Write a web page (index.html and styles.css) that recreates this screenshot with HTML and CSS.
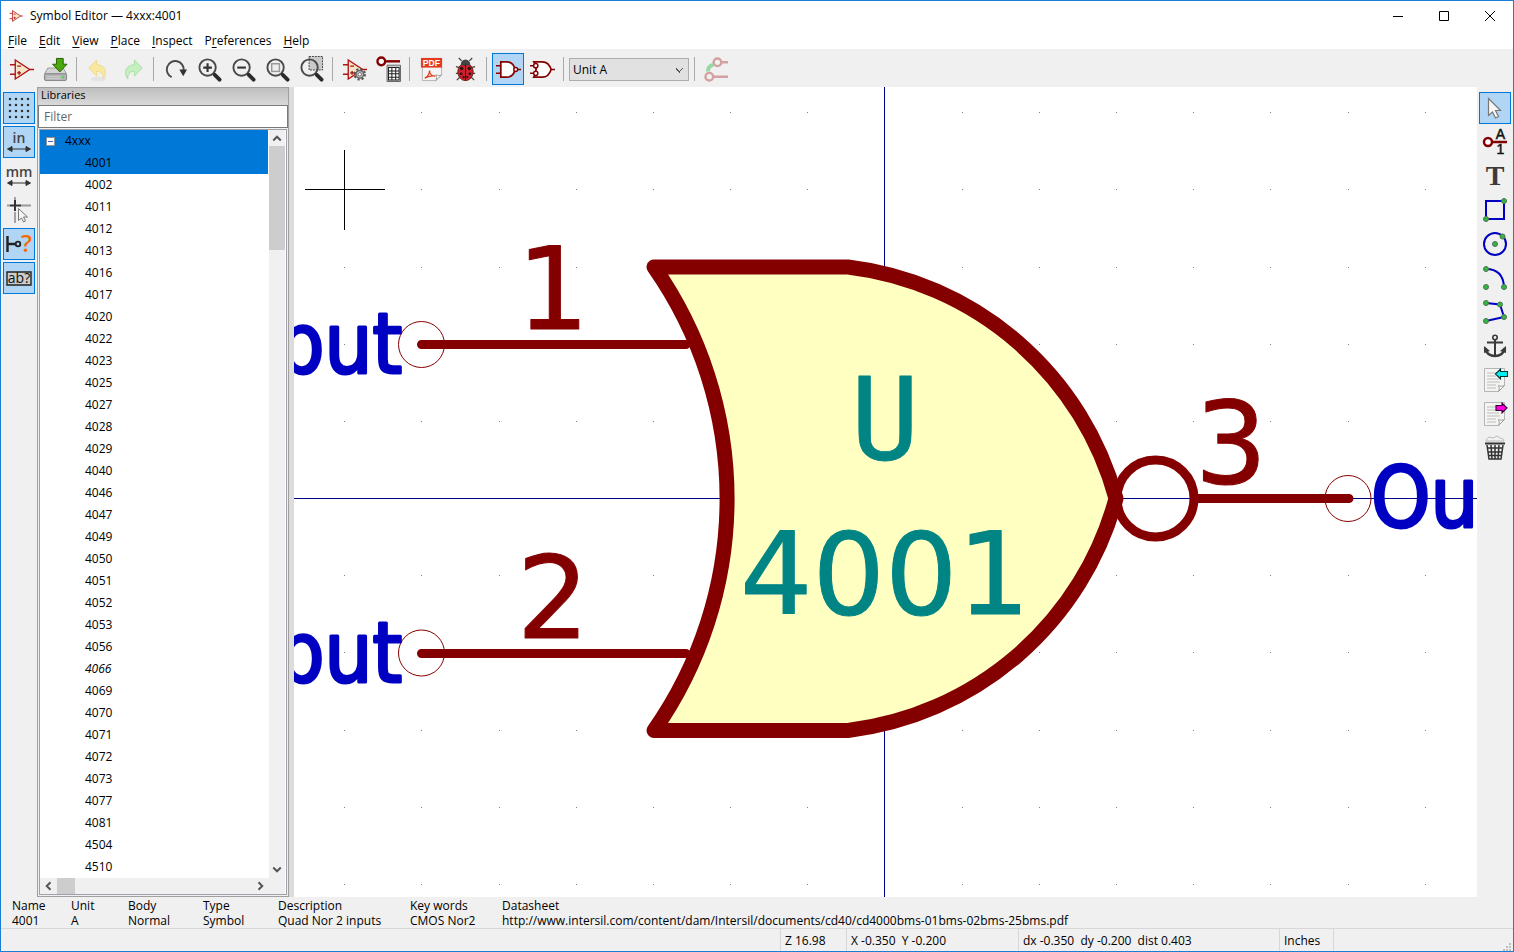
FILE: index.html
```html
<!DOCTYPE html>
<html lang="en">
<head>
<meta charset="utf-8">
<title>Symbol Editor — 4xxx:4001</title>
<link rel="stylesheet" href="styles.css">
</head>
<body>
<svg class="defs" aria-hidden="true">
  <defs>
    <symbol id="opamp" viewBox="0 0 26 26">
      <path d="M6.500 3v20L21.500 13z" fill="#f5e4c6" stroke="#b01414" stroke-width="1.400"/>
      <path d="M1 8h5.500M1 18h5.500M21 13h5M8.500 9.500h4M8.500 16.500h4M10.500 14.500v4" fill="none" stroke="#b01414" stroke-width="1.500"/>
    </symbol>
    <symbol id="lens" viewBox="0 0 26 26">
      <circle cx="11" cy="11" r="8.500" fill="none" stroke="#4a4a4a" stroke-width="2"/>
      <path d="M17 17l2 2" stroke="#4a4a4a" stroke-width="2"/>
      <path d="M18.500 18.500l5 5" stroke="#2b2b2b" stroke-width="4" stroke-linecap="round"/>
    </symbol>
    <symbol id="page" viewBox="0 0 26 26">
      <path d="M3.500 1.500h20v17l-6 6h-14z" fill="#f4f4f2" stroke="#b5b5b5"/>
      <path d="M17.500 24.500c1-2 1-3.500 0-6 2 1 4 1 6 0z" fill="#fff" stroke="#9a9a9a"/>
    </symbol>
    <symbol id="sheet" viewBox="0 0 26 26">
      <use href="#page"/>
      <path d="M6 6h10M6 9h9M6 12h12M6 15h13M6 18h9M6 21h9" stroke="#bdbdbd"/>
    </symbol>
    <symbol id="span" viewBox="0 0 26 26">
      <path d="M5 20h16M6 17.500L1.500 20 6 22.500zM20 17.500l4.500 2.500-4.500 2.500z" fill="#333" stroke="#333"/>
    </symbol>
  </defs>
</svg>
<div class="window">
  <header class="titlebar">
    <svg class="app-icon"><use href="#opamp"/></svg>
    <h1 class="title">Symbol Editor — 4xxx:4001</h1>
    <button class="caption" aria-label="Minimize"><svg viewBox="0 0 12 12"><path d="M1 6.500h10"/></svg></button>
    <button class="caption" aria-label="Maximize"><svg viewBox="0 0 12 12"><path d="M1.500 1.500h9v9h-9z"/></svg></button>
    <button class="caption" aria-label="Close"><svg viewBox="0 0 12 12"><path d="M1 1l10 10M11 1L1 11"/></svg></button>
  </header>

  <nav class="menubar" aria-label="Main menu">
    <button class="menu"><u>F</u>ile</button>
    <button class="menu"><u>E</u>dit</button>
    <button class="menu"><u>V</u>iew</button>
    <button class="menu"><u>P</u>lace</button>
    <button class="menu"><u>I</u>nspect</button>
    <button class="menu">P<u>r</u>eferences</button>
    <button class="menu"><u>H</u>elp</button>
  </nav>

  <div class="toolbar" role="toolbar" aria-label="Main toolbar">
    <button class="tool" aria-label="New symbol"><svg><use href="#opamp"/></svg></button>
    <button class="tool" aria-label="Save"><svg viewBox="0 0 26 26">
      <path d="M5 11.500h16l3.500 6H1.500z" fill="#d4d4d4" stroke="#9a9a9a"/>
      <rect x="1.500" y="17.500" width="23" height="7" rx="1.500" fill="#b2b4b6" stroke="#838383"/>
      <path d="M4 20.500h14M4 22.500h14" stroke="#d0d0d0"/><path d="M20 21h2" stroke="#2ee62e" stroke-width="2"/>
      <path d="M14 1.500h7v6h4l-7.500 8L10 7.500h4z" fill="#4aa80c" stroke="#255d03"/></svg></button>
    <span class="divider"></span>
    <button class="tool" aria-label="Undo" disabled><svg viewBox="0 0 26 26">
      <ellipse cx="13" cy="23" rx="8" ry="2.500" fill="#e4e4e4"/>
      <path d="M11 3v5c8 0 12 7 7 15 0-6-2-8-7-8v5l-8-8.500z" fill="#f9e8a0" stroke="#eedb86"/></svg></button>
    <button class="tool" aria-label="Redo" disabled><svg viewBox="0 0 26 26">
      <path d="M15 3v5C7 8 3 15 8 23c0-6 2-8 7-8v5l8-8.500z" fill="#c6efc0" stroke="#a9dfa6"/></svg></button>
    <span class="divider"></span>
    <button class="tool" aria-label="Refresh"><svg viewBox="0 0 26 26">
      <path d="M9 21A8.800 8.800 0 1 1 21.500 14" fill="none" stroke="#4a4a4a" stroke-width="2"/><path d="M17 13h8l-4 7z" fill="#333"/></svg></button>
    <button class="tool" aria-label="Zoom in"><svg viewBox="0 0 26 26"><use href="#lens"/><path d="M6.500 11h9M11 6.500v9" stroke="#333" stroke-width="2.200"/></svg></button>
    <button class="tool" aria-label="Zoom out"><svg viewBox="0 0 26 26"><use href="#lens"/><path d="M6.500 11h9" stroke="#333" stroke-width="2.200"/></svg></button>
    <button class="tool" aria-label="Zoom to fit"><svg viewBox="0 0 26 26"><use href="#lens"/><rect x="7" y="7" width="8" height="8" fill="#eee" stroke="#999" stroke-width="1.500"/></svg></button>
    <button class="tool" aria-label="Zoom to selection"><svg viewBox="0 0 26 26"><path d="M10.500-.500h14v14h-14z" fill="#c9c9c9" stroke="#444" stroke-dasharray="2 1"/><use href="#lens"/></svg></button>
    <span class="divider"></span>
    <button class="tool" aria-label="Symbol properties"><svg viewBox="0 0 26 26"><use href="#opamp"/>
      <circle cx="18.500" cy="18" r="5" fill="none" stroke="#555" stroke-width="3" stroke-dasharray="2 1.900"/>
      <circle cx="18.500" cy="18" r="4" fill="#c8c8c8" stroke="#666" stroke-width="1.500"/><circle cx="18.500" cy="18" r="1.800" fill="#fff" stroke="#666"/></svg></button>
    <button class="tool" aria-label="Pin table"><svg viewBox="0 0 26 26">
      <path d="M9 4.500h16" stroke="#840000" stroke-width="2.500"/><circle cx="5.500" cy="4.500" r="4" fill="#fff" stroke="#840000" stroke-width="2.500"/>
      <path d="M11.500 8.500h14v17h-14z" fill="#ccc" stroke="#666"/><path d="M13 11h11v13H13z" fill="#fff"/><path d="M13 11h11v13H13zM13 14.500h11M13 17.500h11M13 21h11M16.500 11v13M20.500 11v13" fill="none" stroke="#222" stroke-width="1.100"/></svg></button>
    <span class="divider"></span>
    <button class="tool" aria-label="Show datasheet"><svg viewBox="0 0 26 26"><use href="#page"/>
      <path d="M2 1h22v10H2z" fill="#e33a1f"/>
      <text x="4" y="9" class="pdf">PDF</text>
      <path d="M6 22c3-1 5-5 5-8 0 4 3 6 6 6-4-1-7 0-11 2z" fill="none" stroke="#e33a1f" stroke-width="1.300"/></svg></button>
    <button class="tool" aria-label="Check symbol"><svg viewBox="0 0 26 26">
      <path d="M9 4L6 1M17 4l3-3M3 10l4 1M23 10l-4 1M3 17h4M23 17h-4M4 24l4-4M22 24l-4-4" stroke="#444" stroke-width="1.300"/>
      <ellipse cx="13" cy="15.500" rx="8" ry="9" fill="#cf2030" stroke="#621"/><path d="M8 8a5 5.500 0 0 1 10 0q-5 2-10 0z" fill="#444"/>
      <path d="M13 8v16.500" stroke="#400"/><g fill="#301010"><circle cx="9" cy="12" r="1.800"/><circle cx="17" cy="12" r="1.800"/><circle cx="8.500" cy="17.500" r="1.500"/><circle cx="17.500" cy="17.500" r="1.500"/><circle cx="11" cy="21" r="1.200"/><circle cx="15" cy="21" r="1.200"/></g></svg></button>
    <span class="divider"></span>
    <button class="tool pressed" aria-label="Normal body style" aria-pressed="true"><svg viewBox="0 0 26 26">
      <path d="M0 9h5M0 17h5M22 13h4" stroke="#840000" stroke-width="1.600"/><path d="M5 5h6.500a8 8 0 0 1 0 16H5z" fill="#fff" stroke="#840000" stroke-width="1.800"/><circle cx="20.500" cy="13" r="2" fill="#fff" stroke="#840000" stroke-width="1.500"/></svg></button>
    <button class="tool" aria-label="Alternate body style"><svg viewBox="0 0 26 26">
      <path d="M4 5h9c5 0 7.500 3.500 9 8-1.500 4.500-4 8-9 8H4c3-5 3-11 0-16z" fill="#fff" stroke="#840000" stroke-width="1.800"/><path d="M0 9h4M0 17h4M22 13h4" stroke="#840000" stroke-width="1.600"/><circle cx="6" cy="9" r="2.200" fill="#fff" stroke="#840000" stroke-width="1.500"/><circle cx="6" cy="17" r="2.200" fill="#fff" stroke="#840000" stroke-width="1.500"/></svg></button>
    <span class="divider"></span>
    <select class="unit" aria-label="Unit"><option>Unit A</option></select>
    <span class="divider"></span>
    <button class="tool" aria-label="Synchronized pins" disabled><svg viewBox="0 0 26 26" fill="none">
      <path d="M17 5.500h8M9 20.500h16" stroke="#d5a0a0" stroke-width="2.500"/><circle cx="14" cy="5.500" r="4" stroke="#d5a0a0" stroke-width="2.500"/><circle cx="5.500" cy="20.500" r="4" stroke="#d5a0a0" stroke-width="2.500"/><path d="M4 15c0-4 2-6 6-7" stroke="#98d8a4" stroke-width="4"/></svg></button>
  </div>

  <main class="workspace">
    <div class="rail" role="toolbar" aria-label="Display options">
      <button class="tool pressed" aria-label="Show grid" aria-pressed="true"><svg viewBox="0 0 26 26"><path d="M4 4h20M4 10h20M4 16h20M4 22h20" stroke="#333" stroke-width="2.600" stroke-linecap="round" stroke-dasharray="0 6"/></svg></button>
      <button class="tool pressed" aria-label="Inches" aria-pressed="true"><svg viewBox="0 0 26 26"><text x="13" y="14" class="units">in</text><use href="#span"/></svg></button>
      <button class="tool" aria-label="Millimeters"><svg viewBox="0 0 26 26"><text x="13" y="14" class="units">mm</text><use href="#span"/></svg></button>
      <button class="tool" aria-label="Full-window crosshair"><svg viewBox="0 0 26 26"><path d="M9 0v3M9 15v11M1 8.500h3M15 8.500h10" stroke="#999" stroke-width="1.800"/><path d="M9 3v11M4 8.500h11" stroke="#333" stroke-width="2"/><path d="M12.500 11.500v12l3-2.500 2 4 2-1-2-4h4z" fill="#f4f4f4" stroke="#777"/></svg></button>
      <button class="tool pressed" aria-label="Show pin electrical type" aria-pressed="true"><svg viewBox="0 0 26 26"><path d="M1.500 5v16M2 13h8" stroke="#222" stroke-width="2.400"/><circle cx="12" cy="13" r="2.300" fill="none" stroke="#222" stroke-width="1.800"/><text x="15" y="21" class="question">?</text></svg></button>
      <button class="tool pressed" aria-label="Show hidden fields" aria-pressed="true"><svg viewBox="0 0 26 26"><path d="M1 7h24v13H1z" fill="#ccc" stroke="#222" stroke-width="1.400"/><text x="13" y="18" class="abq">ab?</text></svg></button>
    </div>

    <aside class="libraries">
      <h2 class="panel-title"><label for="filter">Libraries</label></h2>
      <input class="filter" id="filter" type="text" placeholder="Filter">
      <div class="tree">
        <ul class="rows">
          <li class="row root selected"><button class="toggle" aria-label="Collapse 4xxx"></button>4xxx</li>
          <li class="row selected">4001</li>
          <li class="row">4002</li><li class="row">4011</li><li class="row">4012</li><li class="row">4013</li>
          <li class="row">4016</li><li class="row">4017</li><li class="row">4020</li><li class="row">4022</li>
          <li class="row">4023</li><li class="row">4025</li><li class="row">4027</li><li class="row">4028</li>
          <li class="row">4029</li><li class="row">4040</li><li class="row">4046</li><li class="row">4047</li>
          <li class="row">4049</li><li class="row">4050</li><li class="row">4051</li><li class="row">4052</li>
          <li class="row">4053</li><li class="row">4056</li><li class="row alias">4066</li><li class="row">4069</li>
          <li class="row">4070</li><li class="row">4071</li><li class="row">4072</li><li class="row">4073</li>
          <li class="row">4077</li><li class="row">4081</li><li class="row">4504</li><li class="row">4510</li>
        </ul>
        <div class="vscroll">
          <button class="arrow" aria-label="Scroll up"><svg viewBox="0 0 8 8"><path d="M1 6l3-3 3 3"/></svg></button>
          <span class="vthumb"></span>
          <button class="arrow end" aria-label="Scroll down"><svg viewBox="0 0 8 8"><path d="M1 2l3 3 3-3"/></svg></button>
        </div>
        <div class="hscroll">
          <button class="arrow" aria-label="Scroll left"><svg viewBox="0 0 8 8"><path d="M6 1L3 4l3 3"/></svg></button>
          <span class="hthumb"></span>
          <button class="arrow end" aria-label="Scroll right"><svg viewBox="0 0 8 8"><path d="M2 1l3 3-3 3"/></svg></button>
        </div>
      </div>
    </aside>
    <div class="splitter"></div>

    <div class="canvas">
      <svg class="drawing" viewBox="294 87 1183 810" preserveAspectRatio="xMidYMid slice" role="img" aria-label="Symbol 4001">
        <defs>
          <path id="dots" d="M344 0h1v1h-1zM421 0h1v1h-1zM499 0h1v1h-1zM576 0h1v1h-1zM653 0h1v1h-1zM730 0h1v1h-1zM807 0h1v1h-1zM962 0h1v1h-1zM1039 0h1v1h-1zM1116 0h1v1h-1zM1193 0h1v1h-1zM1270 0h1v1h-1zM1348 0h1v1h-1zM1425 0h1v1h-1z"/>
        </defs>
        <g fill="#848484">
          <use href="#dots" y="112"/><use href="#dots" y="189"/><use href="#dots" y="267"/><use href="#dots" y="344"/><use href="#dots" y="421"/>
          <use href="#dots" y="575"/><use href="#dots" y="652"/><use href="#dots" y="730"/><use href="#dots" y="807"/><use href="#dots" y="884"/>
        </g>
        <path class="axis" d="M884.500 87v810M294 498.500h1183"/>
        <path class="body" d="M654 267H848A317 317 0 0 1 1116 498.500A317 317 0 0 1 848 730.500H654A404 404 0 0 0 654 267z"/>
        <g class="pins">
          <path d="M421.500 344.500H686M421.500 653.500H686M1198 498.500H1349"/>
          <circle cx="1155.500" cy="498.500" r="38.500"/>
        </g>
        <g class="ends"><circle cx="421.500" cy="344.500" r="23"/><circle cx="421.500" cy="653" r="23"/><circle cx="1348" cy="498.500" r="23"/></g>
        <g class="pin-number">
          <text x="553" y="329">1</text><text x="553" y="638">2</text><text x="1231" y="483">3</text>
        </g>
        <g class="field"><text class="reference" x="885" y="459">U</text><text x="885" y="614">4001</text></g>
        <g class="pin-name">
          <text x="402" y="373" text-anchor="end">Input</text><text x="402" y="682" text-anchor="end">Input</text><text x="1371" y="527">Output</text>
        </g>
        <path d="M305 189.500h80M344.500 150v80" stroke="#000"/>
      </svg>
    </div>

    <div class="rail" role="toolbar" aria-label="Drawing tools">
      <button class="tool pressed" aria-label="Select" aria-pressed="true"><svg viewBox="0 0 26 26"><path d="M6.500 3.500v17l4-3.500 3 6 3-1.500-3-6h5z" fill="#f8f8f8" stroke="#777" stroke-width="1.200"/></svg></button>
      <button class="tool" aria-label="Add pin"><svg viewBox="0 0 26 26"><path d="M9 13h16" stroke="#840000" stroke-width="2.500"/><circle cx="6" cy="13" r="4" fill="#fff" stroke="#840000" stroke-width="2.500"/><text x="18.500" y="10" class="pin-glyph">A</text><text x="18.500" y="25" class="pin-glyph">1</text></svg></button>
      <button class="tool" aria-label="Add text"><svg viewBox="0 0 26 26"><text x="13" y="22" class="serif-t">T</text></svg></button>
      <button class="tool" aria-label="Add rectangle"><svg class="shape" viewBox="0 0 26 26"><path d="M4 4h18v18H4z"/><circle cx="22" cy="4" r="2.500"/><circle cx="4" cy="22" r="2.500"/></svg></button>
      <button class="tool" aria-label="Add circle"><svg class="shape" viewBox="0 0 26 26"><path d="M13 2a11 11 0 1 1 0 22a11 11 0 1 1 0-22"/><circle cx="13" cy="13" r="2.500"/><circle cx="20.500" cy="5.500" r="2.500"/></svg></button>
      <button class="tool" aria-label="Add arc"><svg class="shape" viewBox="0 0 26 26"><path d="M4 4q17 0 18 18"/><circle cx="4" cy="4" r="2.500"/><circle cx="4" cy="22" r="2.500"/><circle cx="22" cy="22" r="2.500"/></svg></button>
      <button class="tool" aria-label="Add lines"><svg class="shape" viewBox="0 0 26 26"><path d="M4 4l14 1.500 4 12.500L4 22"/><circle cx="4" cy="4" r="2.500"/><circle cx="18" cy="5.500" r="2.500"/><circle cx="22" cy="18" r="2.500"/><circle cx="4" cy="22" r="2.500"/></svg></button>
      <button class="tool" aria-label="Set anchor"><svg viewBox="0 0 26 26" fill="none" stroke="#3a3a3a"><circle cx="13" cy="4.500" r="2.200" stroke-width="1.600"/><path d="M13 7v16M5 9.500h16" stroke-width="2"/><path d="M3 15c1 5 5 8 10 8s9-3 10-8" stroke-width="2.600"/><path d="M2 20v-7l6 5zM24 20v-7l-6 5z" fill="#3a3a3a" stroke="none"/></svg></button>
      <button class="tool" aria-label="Import symbol"><svg viewBox="0 0 26 26"><use href="#sheet" x="-1"/><path d="M13.500 7l5-5v2.500h7v5h-7V12z" fill="#00f0f0" stroke="#033" stroke-width="1.100"/></svg></button>
      <button class="tool" aria-label="Export symbol"><svg viewBox="0 0 26 26"><use href="#sheet" x="-1"/><path d="M25 7l-5-5v2.500h-6v5h6V12z" fill="#f0d" stroke="#303" stroke-width="1.100"/></svg></button>
      <button class="tool" aria-label="Delete"><svg viewBox="0 0 26 26"><path d="M4 5l3-3 4 1 4-2 3 2 3 1 1 2H4z" fill="#f2f2f2" stroke="#bbb"/><path d="M3 8.500h20" stroke="#333" stroke-width="2"/><path d="M5 10l2 14h12l2-14M9 10l1 14M13 10v14M17 10l-1 14M5 13h16M6 17h14M6 20.500h14" fill="none" stroke="#333" stroke-width="1.500"/></svg></button>
    </div>
  </main>

  <dl class="info">
    <div><dt>Name</dt><dd>4001</dd></div>
    <div><dt>Unit</dt><dd>A</dd></div>
    <div><dt>Body</dt><dd>Normal</dd></div>
    <div><dt>Type</dt><dd>Symbol</dd></div>
    <div><dt>Description</dt><dd>Quad Nor 2 inputs</dd></div>
    <div><dt>Key words</dt><dd>CMOS Nor2</dd></div>
    <div><dt>Datasheet</dt><dd>http://www.intersil.com/content/dam/Intersil/documents/cd40/cd4000bms-01bms-02bms-25bms.pdf</dd></div>
  </dl>
  <footer class="status">
    <span></span><span>Z 16.98</span><span>X -0.350&nbsp; Y -0.200</span><span>dx -0.350&nbsp; dy -0.200&nbsp; dist 0.403</span><span>Inches</span>
    <span class="last"><svg class="grip" viewBox="0 0 9 9"><path d="M6 0h2v2H6zM3 3h2v2H3zM6 3h2v2H6zM0 6h2v2H0zM3 6h2v2H3zM6 6h2v2H6z"/></svg></span>
  </footer>
</div>
</body>
</html>
```
FILE: styles.css
```css
* { box-sizing: border-box; margin: 0; padding: 0; }
body { font: 12px/15px "Open Sans", "Noto Sans", sans-serif; color: #000; }
button { font: inherit; color: inherit; background: none; border: 0; }
.defs { position: absolute; width: 0; height: 0; }
.window { display: flex; flex-direction: column; height: 100vh; border: 1px solid #1a7fd4; background: #f0f0f0; overflow: hidden; }

.titlebar { display: flex; align-items: center; height: 29px; flex: none; background: #fff; }
.app-icon { width: 14px; height: 14px; margin: 0 7px 0 8px; }
.title { flex: 1; font-size: 12px; font-weight: 400; }
.caption { width: 46px; height: 28px; display: grid; place-items: center; }
.caption svg { width: 12px; height: 12px; fill: none; stroke: #000; }

.menubar { display: flex; height: 19px; flex: none; padding-left: 1px; background: #fff; }
.menu { padding: 0 6px; line-height: 21px; white-space: nowrap; }
.menu u { text-underline-offset: 2px; }

.toolbar { display: flex; align-items: center; gap: 2px; height: 38px; flex: none; padding: 2px 5px 0 4px; }
.tool { width: 32px; height: 32px; flex: none; display: grid; place-items: center; }
.tool svg { width: 26px; height: 26px; overflow: visible; }
.toolbar > .tool > svg { width: 25px; height: 25px; }
.pressed { background: #b1d6f5; border: 1px solid #0078d7; }
.divider { width: 1px; height: 24px; margin: 0 3px; background: #a9a9a9; }
.unit { width: 120px; height: 23px; padding: 0 5px 0 3px; font: inherit; color: #000; border: 1px solid #adadad; border-radius: 0; appearance: none; background-color: #e1e1e1;
  background-image: linear-gradient(45deg, transparent 50%, #555 50%, #555 62%, transparent 62%), linear-gradient(315deg, transparent 50%, #555 50%, #555 62%, transparent 62%);
  background-size: 5px 5px; background-position: right 8px top 9px, right 4px top 9px; background-repeat: no-repeat; }

.workspace { display: flex; flex: 1; min-height: 0; }
.rail { display: flex; flex-direction: column; gap: 2px; width: 36px; flex: none; padding: 5px 2px; }

.libraries { display: flex; flex-direction: column; width: 252px; flex: none; border: 1px solid #a0a0a0; background: #f0f0f0; }
.panel-title { height: 17px; flex: none; padding-left: 3px; font-size: 11px; line-height: 14px; font-weight: 400; background: linear-gradient(#bfbfbf, #d9d9d9); }
.filter { height: 23px; flex: none; padding: 0 5px 1px; font: inherit; border: 1px solid #7a7a7a; border-radius: 0; background: #fff; }
.filter::placeholder { color: #666; opacity: 1; }
.tree { display: grid; grid-template-columns: 1fr 16px; grid-template-rows: 1fr 16px; flex: 1; min-height: 0; margin: 1px; padding-right: 1px; border: 1px solid #a0a0a8; background: #fff; }
.rows { list-style: none; overflow: hidden; margin-right: 1px; }
.row { height: 22px; padding-left: 45px; line-height: 22px; font-size: 12px; }
.root { display: flex; align-items: center; gap: 10px; padding-left: 6px; }
.selected { background: #0078d7; }
.alias { font-style: italic; }
.toggle { width: 9px; height: 9px; border: 1px solid #919191; background: linear-gradient(#4b63a7, #4b63a7) center / 5px 1px no-repeat #fff; }
.vscroll { display: flex; flex-direction: column; background: #f0f0f0; }
.hscroll { display: flex; grid-column: 1 / 3; background: #f0f0f0; }
.arrow { width: 16px; height: 16px; display: grid; place-items: center; }
.arrow svg { width: 10px; height: 10px; fill: none; stroke: #555; stroke-width: 1.6; }
.vthumb { width: 16px; height: 104px; background: #cdcdcd; }
.hthumb { width: 18px; margin: 0 1px; background: #cdcdcd; }
.arrow.end { margin-top: auto; }
.hscroll .end { margin: 0 16px 0 auto; }
.splitter { width: 5px; flex: none; background: #dcdcdc; }

.canvas { flex: 1; min-width: 0; background: #fff; overflow: hidden; }
.drawing { display: block; width: 100%; height: 100%; }
.axis { stroke: #000084; }
.body { fill: #ffffc2; stroke: #840000; stroke-width: 15px; stroke-linejoin: round; }
.pins { fill: none; stroke: #840000; stroke-width: 9px; stroke-linecap: round; }
.ends { fill: none; stroke: #840000; stroke-width: 1px; }
.pin-number, .field { font: 114px "DejaVu Sans", sans-serif; text-anchor: middle; stroke-width: 1px; stroke-linejoin: round; }
.pin-number { fill: #840000; stroke: #840000; }
.field { fill: #008484; stroke: #008484; }
.reference { font-family: "DejaVu Sans Mono", monospace; }
.pin-name { font: 84px "DejaVu Sans Condensed", "DejaVu Sans", sans-serif; fill: #0000c2; stroke: #0000c2; stroke-width: 3px; stroke-linejoin: round; }

.pdf { font: 700 9px "Liberation Sans", sans-serif; fill: #fff; }
.units { font: 600 14px "Open Sans", sans-serif; fill: #444; text-anchor: middle; }
.question { font: 600 24px "Open Sans", sans-serif; fill: #f76b0c; }
.abq { font: 14px "Open Sans", sans-serif; fill: #111; text-anchor: middle; }
.pin-glyph { font: 14px "Liberation Sans", sans-serif; fill: #111; stroke: #111; text-anchor: middle; stroke-width: 0.5; }
.serif-t { font: 700 28px "Liberation Serif", serif; fill: #3a3a3a; text-anchor: middle; }
.shape path { fill: none; stroke: #0000c2; stroke-width: 2px; }
.shape circle { fill: #30b840; stroke: #52705a; }

.info { display: grid; grid-template-columns: 59px 57px 75px 75px 132px 92px 1fr; height: 32px; flex: none; padding: 1px 0 0 11px; border-bottom: 1px solid #d7d7d7; white-space: nowrap; }
.status { display: grid; grid-template-columns: 1fr 66px 172px 261px 54px 180px; height: 22px; flex: none; line-height: 24px; white-space: nowrap; }
.status span + span { padding-left: 4px; border-left: 1px solid #d7d7d7; }
.status .last { display: flex; align-items: flex-end; justify-content: flex-end; padding: 0 1px 1px 0; }
.grip { width: 9px; height: 9px; fill: #bfbfbf; }
```
